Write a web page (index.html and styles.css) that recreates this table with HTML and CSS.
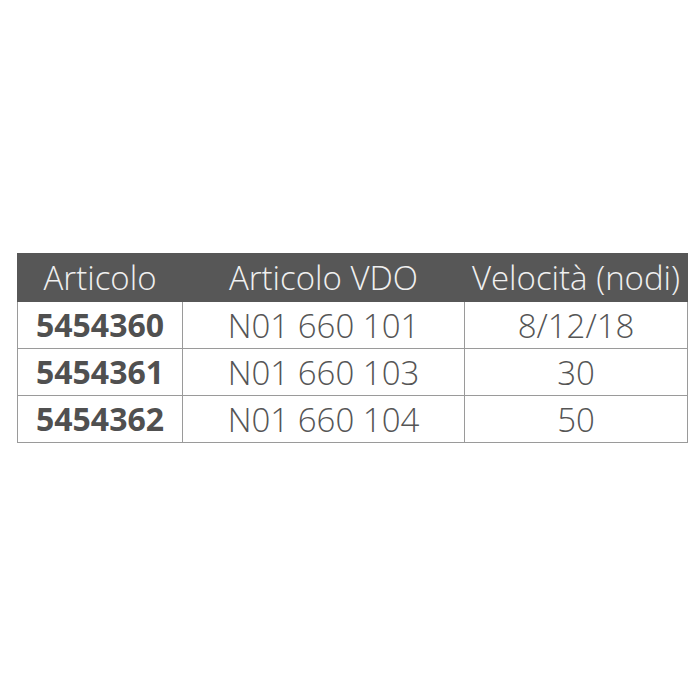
FILE: index.html
```html
<!DOCTYPE html>
<html>
<head>
<meta charset="utf-8">
<link rel="stylesheet" href="styles.css">
</head>
<body>
<div class="page">
<table class="spec">
<colgroup><col class="c1"><col class="c2"><col class="c3"></colgroup>
<thead>
<tr><th>Articolo</th><th>Articolo VDO</th><th>Velocità (nodi)</th></tr>
</thead>
<tbody>
<tr><td class="code">5454360</td><td>N01 660 101</td><td>8/12/18</td></tr>
<tr><td class="code">5454361</td><td>N01 660 103</td><td>30</td></tr>
<tr><td class="code">5454362</td><td>N01 660 104</td><td>50</td></tr>
</tbody>
</table>
</div>
</body>
</html>
```
FILE: styles.css
```css
html, body { margin: 0; padding: 0; background: #fff; }
.page { width: 700px; height: 700px; padding-top: 253px; padding-left: 17px; box-sizing: border-box; }
.spec {
  border-collapse: collapse;
  width: 670px;
  font-family: "Open Sans", sans-serif;
  font-size: 33px;
  line-height: 1;
  color: #555;
  table-layout: fixed;
}
.c1 { width: 165px; }
.c2 { width: 282px; }
.c3 { width: 223px; }
.spec th {
  background: #575757;
  color: #f0f0f0;
  font-weight: 300;
  height: 47px;
  padding: 0;
  text-align: center;
  border: 1px solid #575757;
  white-space: nowrap;
}
.spec td {
  border: 1px solid #9a9a9a;
  height: 46px;
  padding: 0;
  text-align: center;
  font-weight: 300;
  white-space: nowrap;
}
.spec td.code { font-weight: 700; font-size: 32px; color: #505050; }
```
